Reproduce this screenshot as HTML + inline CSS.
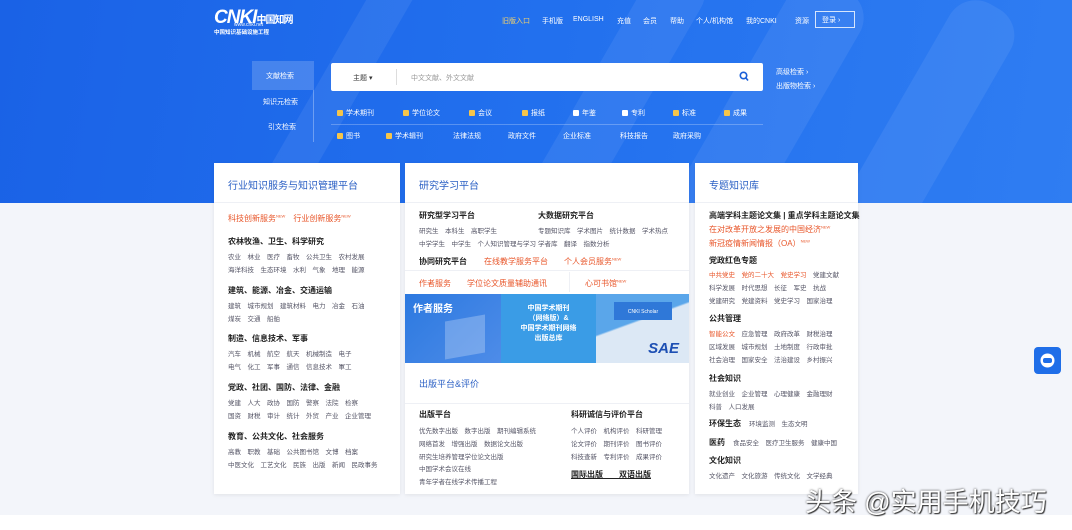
<!DOCTYPE html>
<html><head><meta charset="utf-8">
<style>
*{margin:0;padding:0;box-sizing:border-box}
body{width:1072px;height:530px;overflow:hidden;background:#f3f5fa;font-family:"Liberation Sans","Noto Sans CJK SC",sans-serif;position:relative;font-size:7px;color:#555}
.a{position:absolute;white-space:nowrap}
#hero{position:absolute;left:0;top:0;width:1072px;height:203px;background:linear-gradient(100deg,#1a62e6 0%,#2270ee 50%,#2f7df2 100%);overflow:hidden}
.stripe{position:absolute;width:60px;height:400px;background:rgba(255,255,255,.07);transform:rotate(30deg);border-radius:30px}
.nav{color:#fff;font-size:7px;top:16px}
.card{position:absolute;top:163px;background:#fff;height:331px;box-shadow:0 1px 4px rgba(0,0,0,.08)}
.hd{height:40px;border-bottom:1px solid #eef0f5;color:#2a5fc4;font-size:10px;padding:14px 0 0 14px}
.t{font-size:8px;color:#222;font-weight:bold}
.r{color:#e8562a;font-size:8px}
.g{color:#556;font-size:6.5px}
.cb{display:inline-block;width:6px;height:6px;background:#f6c54a;border-radius:1px;margin-right:3px;vertical-align:middle}
.cbw{background:#fff}
.fl{color:#fff;font-size:7px}
</style></head><body>
<div id="hero">
<div class="stripe" style="left:560px;top:-60px"></div>
<div class="stripe" style="left:700px;top:-40px;width:80px"></div>
<div class="stripe" style="left:860px;top:-20px;width:70px"></div>
<div class="stripe" style="left:300px;top:-80px;width:40px"></div>
<div class="a" style="left:214px;top:7px;color:#fff;font-size:19px;font-weight:bold;font-style:italic;letter-spacing:-1px">CNKI<span style="font-size:10px;font-style:normal">中国知网</span></div>
<div class="a" style="left:234px;top:22px;color:#fff;font-size:5px">www.cnki.net</div>
<div class="a" style="left:214px;top:28px;color:#fff;font-size:5.5px;font-weight:bold">中国知识基础设施工程</div>
<div class="a nav" style="left:502px;color:#f6d36a">旧版入口</div>
<div class="a nav" style="left:542px">手机版</div>
<div class="a nav" style="left:573px">ENGLISH</div>
<div class="a nav" style="left:617px">充值</div>
<div class="a nav" style="left:643px">会员</div>
<div class="a nav" style="left:670px">帮助</div>
<div class="a nav" style="left:696px">个人/机构馆</div>
<div class="a nav" style="left:746px">我的CNKI</div>
<div class="a nav" style="left:795px">资源</div>
<div class="a" style="left:815px;top:11px;width:40px;height:17px;border:1px solid rgba(255,255,255,.8);color:#fff;font-size:7px;padding:3px 0 0 6px">登录 ›</div>
<div class="a" style="left:252px;top:61px;width:62px;height:29px;background:rgba(255,255,255,.18);color:#fff;font-size:7px;padding:10px 0 0 14px">文献检索</div>
<div class="a" style="left:313px;top:90px;width:1px;height:52px;background:rgba(255,255,255,.3)"></div>
<div class="a fl" style="left:263px;top:97px">知识元检索</div>
<div class="a fl" style="left:268px;top:122px">引文检索</div>
<div class="a" style="left:331px;top:63px;width:432px;height:28px;background:#fff;border-radius:2px"></div>
<div class="a" style="left:353px;top:73px;color:#333;font-size:7px">主题 ▾</div>
<div class="a" style="left:396px;top:69px;width:1px;height:16px;background:#ddd"></div>
<div class="a" style="left:411px;top:73px;color:#999;font-size:7px">中文文献、外文文献</div>
<svg class="a" style="left:739px;top:71px" width="10" height="11" viewBox="0 0 10 11"><circle cx="4.5" cy="4.5" r="3.2" fill="none" stroke="#1a5fd8" stroke-width="1.6"/><path d="M7 7l2 2.5" stroke="#1a5fd8" stroke-width="1.6"/></svg>
<div class="a fl" style="left:776px;top:67px">高级检索 ›</div>
<div class="a fl" style="left:776px;top:81px">出版物检索 ›</div>
<div class="a fl" style="left:337px;top:108px"><span class="cb"></span>学术期刊</div>
<div class="a fl" style="left:403px;top:108px"><span class="cb"></span>学位论文</div>
<div class="a fl" style="left:469px;top:108px"><span class="cb"></span>会议</div>
<div class="a fl" style="left:522px;top:108px"><span class="cb"></span>报纸</div>
<div class="a fl" style="left:573px;top:108px"><span class="cb cbw"></span>年鉴</div>
<div class="a fl" style="left:622px;top:108px"><span class="cb cbw"></span>专利</div>
<div class="a fl" style="left:673px;top:108px"><span class="cb"></span>标准</div>
<div class="a fl" style="left:724px;top:108px"><span class="cb"></span>成果</div>
<div class="a" style="left:331px;top:124px;width:432px;height:1px;background:rgba(255,255,255,.25)"></div>
<div class="a fl" style="left:337px;top:131px"><span class="cb"></span>图书</div>
<div class="a fl" style="left:386px;top:131px"><span class="cb"></span>学术辑刊</div>
<div class="a fl" style="left:453px;top:131px">法律法规</div>
<div class="a fl" style="left:508px;top:131px">政府文件</div>
<div class="a fl" style="left:563px;top:131px">企业标准</div>
<div class="a fl" style="left:620px;top:131px">科技报告</div>
<div class="a fl" style="left:673px;top:131px">政府采购</div>
</div>

<div class="card" style="left:214px;width:186px">
<div class="hd">行业知识服务与知识管理平台</div>
<div class="a r" style="left:14px;top:50px">科技创新服务<sup style="font-size:4px">NEW</sup>　行业创新服务<sup style="font-size:4px">NEW</sup></div>
<div class="a t" style="left:14px;top:73px">农林牧渔、卫生、科学研究</div>
<div class="a g" style="left:14px;top:88px">农业　林业　医疗　畜牧　公共卫生　农村发展</div>
<div class="a g" style="left:14px;top:101px">海洋科技　生态环境　水利　气象　地理　能源</div>
<div class="a t" style="left:14px;top:122px">建筑、能源、冶金、交通运输</div>
<div class="a g" style="left:14px;top:137px">建筑　城市规划　建筑材料　电力　冶金　石油</div>
<div class="a g" style="left:14px;top:150px">煤炭　交通　船舶</div>
<div class="a t" style="left:14px;top:170px">制造、信息技术、军事</div>
<div class="a g" style="left:14px;top:185px">汽车　机械　航空　航天　机械制造　电子</div>
<div class="a g" style="left:14px;top:198px">电气　化工　军事　通信　信息技术　軍工</div>
<div class="a t" style="left:14px;top:219px">党政、社团、国防、法律、金融</div>
<div class="a g" style="left:14px;top:234px">党建　人大　政协　国防　警察　法院　检察</div>
<div class="a g" style="left:14px;top:247px">国资　财税　审计　统计　外贸　产业　企业管理</div>
<div class="a t" style="left:14px;top:268px">教育、公共文化、社会服务</div>
<div class="a g" style="left:14px;top:283px">高教　职教　基础　公共图书馆　文博　档案</div>
<div class="a g" style="left:14px;top:296px">中医文化　工艺文化　民族　出版　新闻　民政事务</div>
</div>

<div class="card" style="left:405px;width:284px">
<div class="hd">研究学习平台</div>
<div class="a t" style="left:14px;top:47px">研究型学习平台</div>
<div class="a t" style="left:133px;top:47px">大数据研究平台</div>
<div class="a g" style="left:14px;top:62px">研究生　本科生　高职学生</div>
<div class="a g" style="left:133px;top:62px">专题知识库　学术图片　统计数据　学术热点</div>
<div class="a g" style="left:14px;top:75px">中学学生　中学生　个人知识管理与学习</div>
<div class="a g" style="left:133px;top:75px">学者库　翻译　指数分析</div>
<div class="a t" style="left:14px;top:93px">协同研究平台</div>
<div class="a r" style="left:79px;top:93px">在线教学服务平台　　个人会员服务<sup style="font-size:4px">NEW</sup></div>
<div class="a" style="left:0;top:107px;width:284px;height:1px;background:#eef0f5"></div>
<div class="a r" style="left:14px;top:115px">作者服务　　学位论文质量辅助通讯</div>
<div class="a" style="left:164px;top:109px;width:1px;height:20px;background:#eef0f5"></div>
<div class="a r" style="left:180px;top:115px">心可书馆<sup style="font-size:4px">NEW</sup></div>
<div class="a" style="left:0;top:131px;width:96px;height:69px;background:linear-gradient(135deg,#2c79e0,#4e8ce8)"><div style="color:#fff;font-size:10px;font-weight:bold;padding:6px 0 0 8px">作者服务</div><div style="position:absolute;left:40px;top:24px;width:40px;height:38px;background:rgba(255,255,255,.25);transform:skewY(-10deg)"></div></div>
<div class="a" style="left:96px;top:131px;width:95px;height:69px;background:#3a9ce6;color:#fff;font-size:7px;font-weight:bold;text-align:center;padding-top:10px;line-height:10px">中国学术期刊<br>（网络版）&amp;<br>中国学术期刊网络<br>出版总库</div>
<div class="a" style="left:191px;top:131px;width:93px;height:69px;background:linear-gradient(160deg,#5aa6ea 40%,#dce8f5 42%)"><div style="margin:8px 0 0 18px;width:58px;height:18px;background:#2f78d8;color:#fff;font-size:5px;text-align:center;padding-top:7px">CNKI Scholar</div><div style="position:absolute;right:10px;bottom:6px;color:#1d4fb3;font-size:15px;font-weight:bold;font-style:italic">SAE</div></div>
<div class="a" style="left:14px;top:214px;color:#2a5fc4;font-size:9px">出版平台&amp;评价</div>
<div class="a" style="left:0;top:240px;width:284px;height:1px;background:#eef0f5"></div>
<div class="a t" style="left:14px;top:246px">出版平台</div>
<div class="a t" style="left:166px;top:246px">科研诚信与评价平台</div>
<div class="a g" style="left:14px;top:262px">优先数字出版　数字出版　期刊编辑系统</div>
<div class="a g" style="left:14px;top:275px">网络首发　增强出版　数据论文出版</div>
<div class="a g" style="left:14px;top:288px">研究生培养管理学位论文出版</div>
<div class="a g" style="left:14px;top:300px">中国学术会议在线</div>
<div class="a g" style="left:14px;top:313px">青年学者在线学术传播工程</div>
<div class="a g" style="left:166px;top:262px">个人评价　机构评价　科研管理</div>
<div class="a g" style="left:166px;top:275px">论文评价　期刊评价　图书评价</div>
<div class="a g" style="left:166px;top:288px">科技查新　专利评价　成果评价</div>
<div class="a t" style="left:166px;top:306px;text-decoration:underline">国际出版　　双语出版</div>
</div>

<div class="card" style="left:695px;width:163px">
<div class="hd">专题知识库</div>
<div class="a t" style="left:14px;top:47px">高端学科主题论文集 | 重点学科主题论文集</div>
<div class="a r" style="left:14px;top:61px">在对改革开放之发展的中国经济<sup style="font-size:4px">NEW</sup></div>
<div class="a r" style="left:14px;top:75px">新冠疫情新闻情报（OA）<sup style="font-size:4px">NEW</sup></div>
<div class="a t" style="left:14px;top:92px">党政红色专题</div>
<div class="a g" style="left:14px;top:106px"><span style="color:#e8562a">中共党史　党的二十大　党史学习</span>　党建文献</div>
<div class="a g" style="left:14px;top:119px">科学发展　时代思想　长征　军史　抗战</div>
<div class="a g" style="left:14px;top:132px">党建研究　党建资料　党史学习　国家治理</div>
<div class="a t" style="left:14px;top:150px">公共管理</div>
<div class="a g" style="left:14px;top:165px"><span style="color:#e8562a">智能公文</span>　应急管理　政府改革　财税治理</div>
<div class="a g" style="left:14px;top:178px">区域发展　城市规划　土地制度　行政审批</div>
<div class="a g" style="left:14px;top:191px">社会治理　国家安全　法治建设　乡村振兴</div>
<div class="a t" style="left:14px;top:210px">社会知识</div>
<div class="a g" style="left:14px;top:225px">就业创业　企业管理　心理健康　金融理财</div>
<div class="a g" style="left:14px;top:238px">科普　人口发展</div>
<div class="a t" style="left:14px;top:255px">环保生态　<span class="g" style="font-weight:normal">环境监测　生态文明</span></div>
<div class="a t" style="left:14px;top:274px">医药　<span class="g" style="font-weight:normal">食品安全　医疗卫生服务　健康中国</span></div>
<div class="a t" style="left:14px;top:292px">文化知识</div>
<div class="a g" style="left:14px;top:307px">文化遗产　文化旅游　传统文化　文学经典</div>
</div>

<div class="a" style="left:1034px;top:347px;width:27px;height:27px;background:#1f6ee8;border-radius:4px"><svg width="27" height="27" viewBox="0 0 27 27"><circle cx="13.5" cy="13.5" r="7" fill="#fff"/><rect x="9" y="11" width="9" height="5" rx="2" fill="#1f6ee8"/></svg></div>
<div class="a" style="left:0;top:515px;width:1072px;height:15px;background:#fff"></div>
<div class="a" style="left:805px;top:482px;color:#fff;font-size:26px;text-shadow:0 0 2px #333,1px 1px 1px #333">头条 @实用手机技巧</div>
</body></html>
